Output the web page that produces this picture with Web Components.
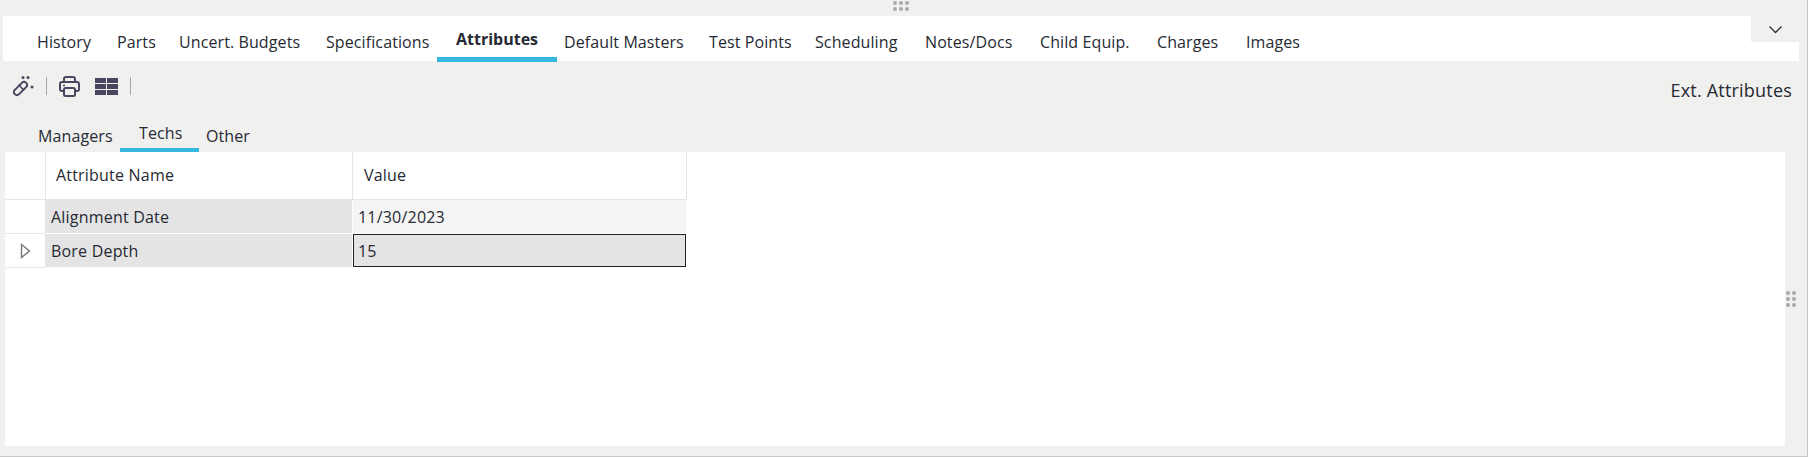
<!DOCTYPE html>
<html>
<head>
<meta charset="utf-8">
<title>Ext. Attributes</title>
<style>
  html, body { margin: 0; height: 100%; background: #f0f0ef; overflow: hidden; }
  body { font-family: "Open Sans", "Noto Sans", sans-serif; color: #262a33; }
</style>
</head>
<body>

<template id="equip-panel">
  <style>
    :host {
      display: flex;
      flex-direction: column;
      position: relative;
      box-sizing: border-box;
      width: 1808px;
      height: 457px;
      padding-top: 16px;
      background: #f0f0ef;
      border-right: 1px solid #c9c9c9;
      border-bottom: 1px solid #c9c9c9;
    }
    .grip {
      position: absolute;
      display: grid;
      gap: 2px;
    }
    .grip i { width: 4px; height: 4px; border-radius: 50%; background: #a9a9a9; }
    .top { left: 893px; top: 1px; grid-template-columns: repeat(3, 4px); }
    .side { left: 1786px; top: 291px; grid-template-columns: repeat(2, 4px); }
  </style>
  <div class="grip top"><i></i><i></i><i></i><i></i><i></i><i></i></div>
  <slot></slot>
  <div class="grip side"><i></i><i></i><i></i><i></i><i></i><i></i></div>
</template>

<template id="tab-bar">
  <style>
    :host {
      display: flex;
      position: relative;
      box-sizing: border-box;
      height: 45px;
      margin: 0 8px 0 3px;
      background: #fff;
    }
    .more {
      position: absolute;
      top: 0;
      right: 0;
      width: 48px;
      height: 26px;
      background: #f0f0ef;
      display: flex;
      align-items: center;
      justify-content: center;
    }
  </style>
  <slot></slot>
  <div class="more">
    <svg width="15" height="9" viewBox="0 0 15 9"><path d="M1.5 1.5 7.5 7.5 13.5 1.5" fill="none" stroke="#30333a" stroke-width="1.3"/></svg>
  </div>
</template>

<template id="tab-item">
  <style>
    :host {
      display: block;
      flex: none;
      box-sizing: border-box;
      height: 46px;
      padding-left: 13px;
      font-size: 16px;
      letter-spacing: .1px;
      line-height: 53px;
      white-space: nowrap;
      border-bottom: 5px solid transparent;
      overflow: hidden;
    }
    :host([active]) {
      font-weight: 700;
      letter-spacing: 0;
      line-height: 47px;
      border-bottom-color: #35b8e0;
    }
  </style>
  <slot></slot>
</template>

<template id="tool-strip">
  <style>
    :host {
      display: flex;
      align-items: center;
      box-sizing: border-box;
      height: 54px;
      padding: 0 15px 4px 13px;
    }
    .sep { width: 1px; height: 18px; background: #a5a5a5; flex: none; }
    svg { display: block; flex: none; }
    .title { margin: 8px 0 0 auto; font-size: 18px; letter-spacing: .2px; }
  </style>
  <svg width="21" height="21" viewBox="0 0 21 21" fill="none" stroke="#4b4660" stroke-width="2">
    <rect x="-8" y="-3" width="16" height="6" rx="3" transform="translate(7.500 12.500) rotate(-45)"/>
    <path d="M5.500 8.500 10.500 14" stroke-width="1.600"/>
    <circle cx="10" cy="1.500" r="1.500" fill="#4b4660" stroke="none"/>
    <circle cx="15" cy="1.500" r="1.500" fill="#4b4660" stroke="none"/>
    <circle cx="19" cy="11" r="1.500" fill="#4b4660" stroke="none"/>
  </svg>
  <span class="sep" style="margin-left:12px"></span>
  <svg style="margin-left:12px" width="21" height="21" viewBox="0 0 21 21" fill="none" stroke="#4b4660" stroke-width="2">
    <path d="M5 6V3a2 2 0 0 1 2-2h7a2 2 0 0 1 2 2v3"/>
    <path d="M5 15H3a2 2 0 0 1-2-2V8a2 2 0 0 1 2-2h15a2 2 0 0 1 2 2v5a2 2 0 0 1-2 2h-2"/>
    <rect x="5" y="12" width="11" height="8" rx="1.500"/>
    <path d="M4 9.500h2" stroke-width="1.600"/>
  </svg>
  <svg style="margin-left:15px" width="23" height="17" viewBox="0 0 23 17" fill="#4b4660">
    <rect x="0" y="0" width="11" height="5"/><rect x="12" y="0" width="11" height="5"/>
    <rect x="0" y="6" width="11" height="5"/><rect x="12" y="6" width="11" height="5"/>
    <rect x="0" y="12" width="11" height="5"/><rect x="12" y="12" width="11" height="5"/>
  </svg>
  <span class="sep" style="margin-left:12px"></span>
  <span class="title"><slot></slot></span>
</template>

<template id="sub-tabs">
  <style>
    :host { display: flex; height: 37px; padding-left: 38px; }
  </style>
  <slot></slot>
</template>

<template id="sub-tab">
  <style>
    :host {
      display: block;
      box-sizing: border-box;
      height: 37px;
      font-size: 16px;
      letter-spacing: .1px;
      line-height: 42px;
      border-bottom: 4px solid transparent;
      white-space: nowrap;
    }
    :host([active]) {
      line-height: 37px;
      border-bottom-color: #35b8e0;
    }
  </style>
  <slot></slot>
</template>

<template id="attr-grid">
  <style>
    :host {
      display: block;
      flex: 1;
      margin: 0 22px 10px 5px;
      background: #fff;
      font-size: 16px;
      letter-spacing: .2px;
    }
    .table {
      display: grid;
      grid-template-columns: 41px 307px 334px;
      grid-template-rows: 48px;
      grid-auto-rows: 34px;
      width: 682px;
    }
  </style>
  <div class="table"><slot></slot></div>
</template>

<template id="grid-cell">
  <style>
    :host {
      display: flex;
      align-items: center;
      box-sizing: border-box;
      padding-left: 5px;
      white-space: nowrap;
      border-bottom: 1px solid #fff;
      border-right: 1px solid #fff;
    }
    :host([kind="corner"]), :host([kind="marker"]) {
      padding: 0;
      justify-content: center;
      border-bottom: 1px solid #e6e6e6;
      border-right: 1px solid #e6e6e6;
      background: #fff;
    }
    :host([kind="head"]) {
      padding: 0 0 1px 10px;
      background: #fff;
      border-bottom: 1px solid #e6e6e6;
      border-right: 1px solid #e6e6e6;
    }
    :host([kind="name"]) { background: #e4e4e4; }
    :host([kind="value"]) { background: #f4f4f4; }
    :host([kind="current"]) {
      background: #e4e4e4;
      padding-left: 4px;
      margin: 0 1px 1px 0;
      border: 1px solid #222;
    }
  </style>
  <slot></slot>
</template>

<equip-panel>
  <tab-bar>
    <tab-item style="width:101px;padding-left:34px">History</tab-item>
    <tab-item style="width:62px">Parts</tab-item>
    <tab-item style="width:147px">Uncert. Budgets</tab-item>
    <tab-item style="width:124px">Specifications</tab-item>
    <tab-item active style="width:120px;padding-left:19px">Attributes</tab-item>
    <tab-item style="width:139px;padding-left:7px">Default Masters</tab-item>
    <tab-item style="width:106px">Test Points</tab-item>
    <tab-item style="width:110px">Scheduling</tab-item>
    <tab-item style="width:115px">Notes/Docs</tab-item>
    <tab-item style="width:117px">Child Equip.</tab-item>
    <tab-item style="width:89px">Charges</tab-item>
    <tab-item style="width:90px">Images</tab-item>
  </tab-bar>
  <tool-strip>Ext. Attributes</tool-strip>
  <sub-tabs>
    <sub-tab style="width:82px">Managers</sub-tab>
    <sub-tab active style="width:79px;padding-left:19px">Techs</sub-tab>
    <sub-tab style="padding-left:7px">Other</sub-tab>
  </sub-tabs>
  <attr-grid>
    <grid-cell kind="corner"></grid-cell>
    <grid-cell kind="head">Attribute Name</grid-cell>
    <grid-cell kind="head" style="padding-left:11px">Value</grid-cell>

    <grid-cell kind="marker"></grid-cell>
    <grid-cell kind="name">Alignment Date</grid-cell>
    <grid-cell kind="value">11/30/2023</grid-cell>

    <grid-cell kind="marker">
      <svg width="11" height="16" viewBox="0 0 11 16"><path d="M1.500 1.500 9.500 8 1.500 14.500Z" fill="none" stroke="#777" stroke-width="1.400"/></svg>
    </grid-cell>
    <grid-cell kind="name">Bore Depth</grid-cell>
    <grid-cell kind="current">15</grid-cell>
  </attr-grid>
</equip-panel>

<script>
  // every element here is the same: clone its template into an open shadow root
  ['equip-panel', 'tab-bar', 'tab-item', 'tool-strip', 'sub-tabs', 'sub-tab', 'attr-grid', 'grid-cell'].forEach(function(name) {
    class Piece extends HTMLElement {
      constructor() {
        super();
        let shadowRoot = this.attachShadow({mode: 'open'});
        shadowRoot.appendChild(document.getElementById(name).content.cloneNode(true));
      }
    }
    customElements.define(name, Piece);
  });
</script>
</body>
</html>
